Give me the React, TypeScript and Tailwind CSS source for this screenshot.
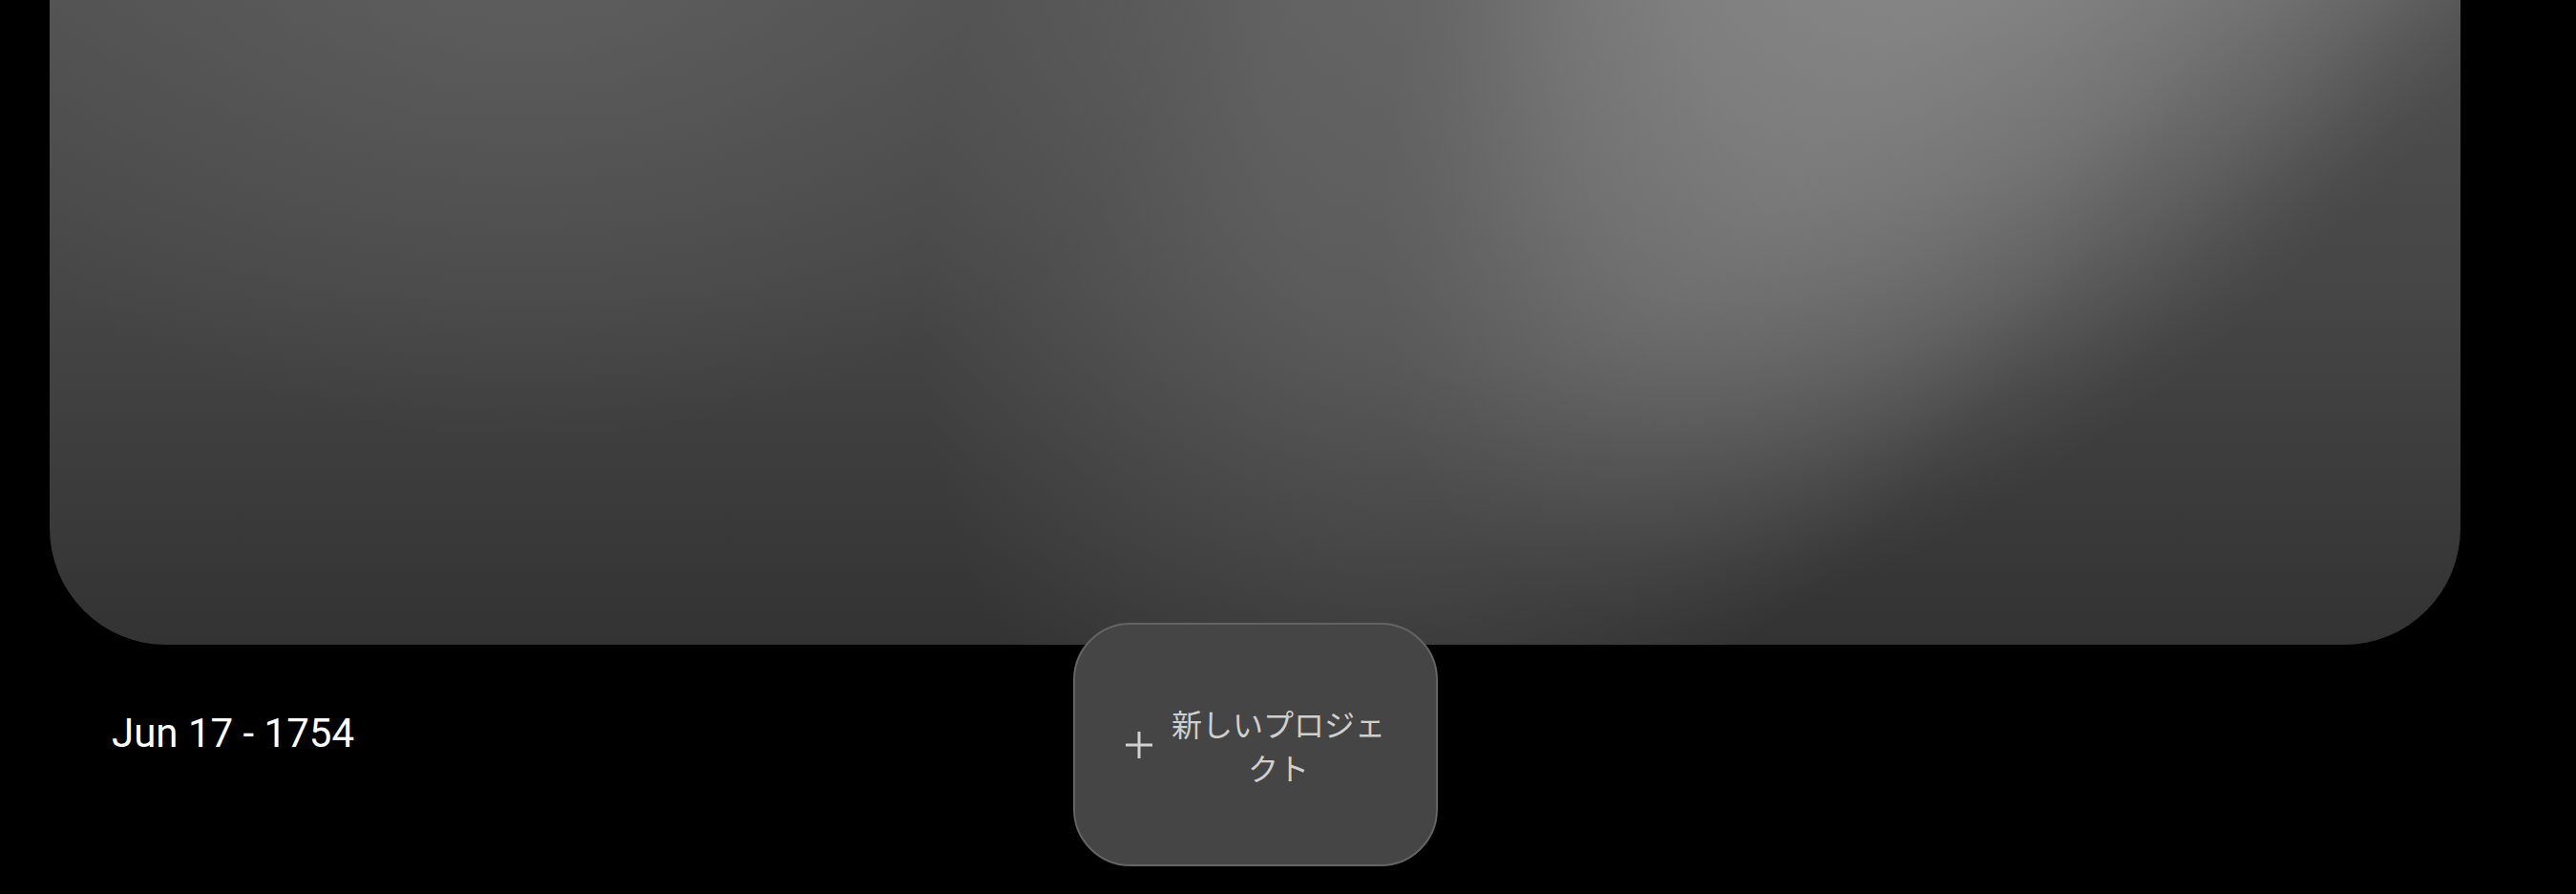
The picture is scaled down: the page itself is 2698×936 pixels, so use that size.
import React from "react";

export default function App() {
  return (
    <div className="w-[2698px] h-[936px] bg-black overflow-hidden" style={{ fontFamily: "Roboto, 'Noto Sans CJK JP', sans-serif" }}>
      <div className="ml-[52px] w-[2525px]">
        <div className="relative h-[675px] rounded-b-[122px] overflow-hidden bg-[linear-gradient(to_bottom,#4f4f4f_0%,#464646_45%,#3d3d3d_70%,#333333_100%)]">
          <div className="absolute inset-0 bg-[radial-gradient(ellipse_700px_520px_at_500px_-60px,rgba(110,110,110,0.5),rgba(110,110,110,0)_100%)]" />
          <div className="absolute left-[1050px] top-[-1100px] w-[1200px] h-[2050px] rotate-[31deg] bg-[radial-gradient(closest-side,rgba(160,160,160,0.32)_0%,rgba(160,160,160,0.24)_50%,rgba(160,160,160,0.1)_78%,rgba(160,160,160,0)_100%)]" />
          <div className="absolute left-[1720px] top-[-1960px] w-[1160px] h-[2800px] rotate-[33deg] bg-[radial-gradient(closest-side,rgba(160,160,160,0.62)_0%,rgba(160,160,160,0.57)_45%,rgba(160,160,160,0.44)_63%,rgba(160,160,160,0.27)_77%,rgba(160,160,160,0.11)_88%,rgba(160,160,160,0.03)_95%,rgba(160,160,160,0)_100%)]" />
        </div>
        <div className="-mt-[23px] grid grid-cols-[1fr_auto_1fr] items-center">
          <div className="pl-[65px] mb-[24px] text-white text-[42px] leading-none" style={{ fontFamily: "Roboto, sans-serif" }}>
            Jun 17 - 1754
          </div>
          <button className="relative w-[382px] h-[255px] rounded-[60px] bg-[#454545] border-2 border-[#646464] flex items-center pl-[53px] pr-[52px] gap-[20px]">
            <svg width="28" height="28" viewBox="0 0 28 28" className="shrink-0">
              <path d="M14 0V28M0 14H28" stroke="#d2d2d2" strokeWidth="3" fill="none" />
            </svg>
            <span className="w-[229px] text-center text-[32px] leading-[46px] text-[#cfcfcf]" style={{ fontFamily: "'Noto Sans CJK JP', sans-serif" }}>
              新しいプロジェクト
            </span>
          </button>
          <div />
        </div>
      </div>
    </div>
  );
}
